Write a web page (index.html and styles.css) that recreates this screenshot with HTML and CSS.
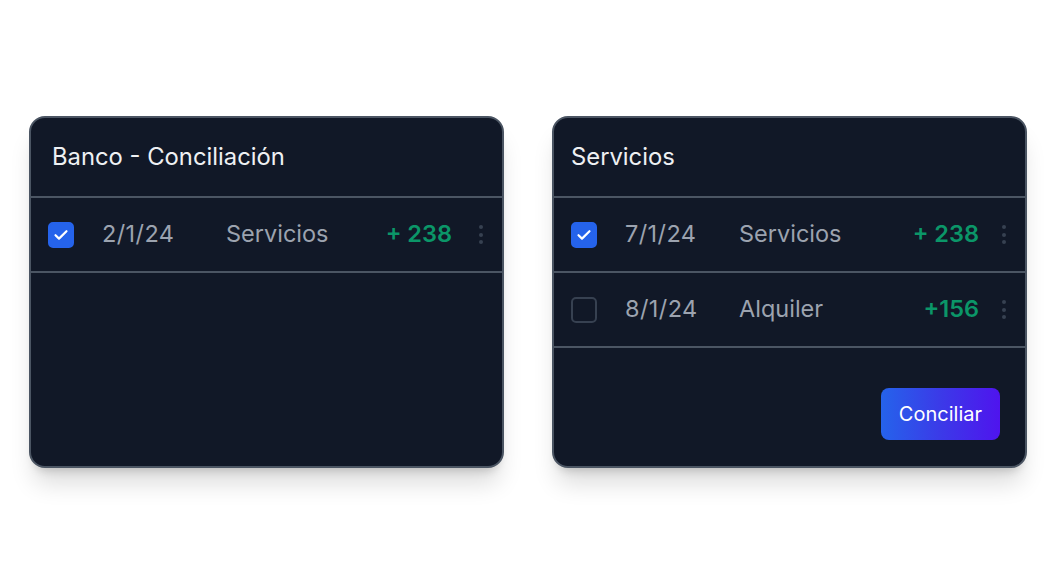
FILE: index.html
```html
<!DOCTYPE html>
<html lang="es">
<head>
<meta charset="utf-8">
<title>Conciliación</title>
<link rel="stylesheet" href="styles.css">
</head>
<body>
<main class="board">
  <section class="card card--bank">
    <header class="card-head">Banco - Conciliación</header>
    <div class="row">
      <span class="check check--on"><svg viewBox="0 0 26 26" width="26" height="26"><path d="M7.5 13.2 L11 16.6 L18.5 9.2" fill="none" stroke="#fff" stroke-width="2.2" stroke-linecap="round" stroke-linejoin="round"/></svg></span>
      <span class="date">2/1/24</span>
      <span class="desc">Servicios</span>
      <span class="amount">+ 238</span>
      <span class="kebab"><i></i><i></i><i></i></span>
    </div>
  </section>
  <section class="card card--services">
    <header class="card-head">Servicios</header>
    <div class="row">
      <span class="check check--on"><svg viewBox="0 0 26 26" width="26" height="26"><path d="M7.5 13.2 L11 16.6 L18.5 9.2" fill="none" stroke="#fff" stroke-width="2.2" stroke-linecap="round" stroke-linejoin="round"/></svg></span>
      <span class="date">7/1/24</span>
      <span class="desc">Servicios</span>
      <span class="amount">+ 238</span>
      <span class="kebab"><i></i><i></i><i></i></span>
    </div>
    <div class="row">
      <span class="check"></span>
      <span class="date">8/1/24</span>
      <span class="desc">Alquiler</span>
      <span class="amount">+156</span>
      <span class="kebab"><i></i><i></i><i></i></span>
    </div>
    <footer class="card-foot">
      <button class="btn">Conciliar</button>
    </footer>
  </section>
</main>
</body>
</html>
```
FILE: styles.css
```css
* { box-sizing: border-box; }
html, body { margin: 0; height: 100%; background: #ffffff; }
body { font-family: Inter, "Noto Sans", sans-serif; }

.board {
  height: 100%;
  display: flex;
  align-items: center;
  gap: 48px;
  padding: 0 29px;
}

.card {
  flex: 1;
  height: 352px;
  background: #111827;
  border: 2px solid #4b5563;
  border-radius: 16px;
  box-shadow: 0 20px 25px -5px rgba(0,0,0,0.14), 0 8px 10px -6px rgba(0,0,0,0.18);
  display: flex;
  flex-direction: column;
  overflow: hidden;
}

.card-head {
  height: 80px;
  flex: none;
  display: flex;
  align-items: center;
  padding: 0 20px 2px 21px;
  font-size: 23.8px;
  color: #eef0f3;
  border-bottom: 2px solid #4b5563;
}
.card--services .card-head { padding-left: 17px; }

.row {
  height: 75px;
  flex: none;
  display: grid;
  grid-template-columns: 26px 152px 1fr auto 4px;
  column-gap: 0;
  align-items: center;
  padding: 0 19px 0 17px;
  border-bottom: 2px solid #4b5563;
  font-size: 23.5px;
}
.card--services .row { grid-template-columns: 26px 142px 1fr auto 4px; }

.check {
  grid-column: 1;
  width: 26px;
  height: 26px;
  border-radius: 5px;
  border: 2px solid #374151;
  display: block;
}
.check svg { display: block; margin: -2px; }
.check--on { background: #2563eb; border-color: #2563eb; }

.date, .desc, .amount { margin-bottom: 3px; }
.date { grid-column: 2; color: #9ca3af; margin-left: 28px; letter-spacing: 0.4px; }
.desc { grid-column: 3; color: #9ca3af; }
.amount {
  grid-column: 4;
  color: #0b9668;
  font-weight: 600;
  margin-right: 27px;
}
.card--services .amount { margin-right: 23px; }

.kebab {
  grid-column: 5;
  display: flex;
  flex-direction: column;
  gap: 3.5px;
  width: 4px;
}
.kebab i {
  display: block;
  width: 4px;
  height: 4px;
  border-radius: 50%;
  background: #374151;
}

.card-foot {
  display: flex;
  justify-content: flex-end;
  padding: 40px 25px 0;
}

.btn {
  height: 52px;
  padding: 0 18px;
  border: none;
  border-radius: 8px;
  background: linear-gradient(90deg, #2563eb 0%, #3b3ae8 50%, #4f14ee 100%);
  color: #ffffff;
  font-family: Inter, "Noto Sans", sans-serif;
  font-size: 20px;
  font-weight: 400;
}
```
